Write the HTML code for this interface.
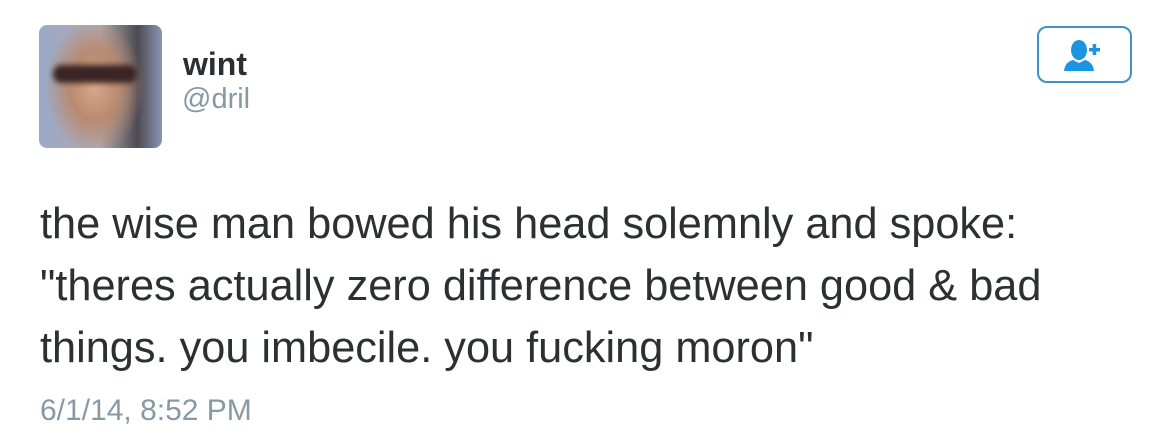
<!DOCTYPE html>
<html><head><meta charset="utf-8"><style>
html,body{margin:0;padding:0;background:#fff;width:1153px;height:440px;overflow:hidden;font-family:"Liberation Sans",sans-serif;}
.av{position:absolute;left:39px;top:25px;width:123px;height:123px;border-radius:8px;overflow:hidden;
background:radial-gradient(ellipse 40% 55% at 45% 50%,#d9a98a 0%,#b88a70 50%,rgba(150,130,120,0) 100%),linear-gradient(90deg,#9aa9c8 0%,#b0aab0 50%,#4d4a52 80%,#8a96b5 100%);}
.gl{position:absolute;left:14px;top:40px;width:84px;height:18px;background:#3a2424;border-radius:8px;filter:blur(3px);}
.name{position:absolute;left:183px;top:46px;font-size:32px;font-weight:bold;color:#292f33;}
.handle{position:absolute;left:182px;top:83px;font-size:29px;color:#8899a6;}
.btn{position:absolute;left:1037px;top:26px;width:95px;height:57px;border:2.5px solid #3b94c6;border-radius:10px;box-sizing:border-box;}
.body{position:absolute;left:40px;top:193px;font-size:43.3px;line-height:62px;color:#2b3033;white-space:nowrap;}
.date{position:absolute;left:40px;top:394px;font-size:30px;color:#8899a6;}
</style></head><body>
<div class="av"><div class="gl"></div></div>
<div class="name">wint</div>
<div class="handle">@dril</div>
<div class="btn"><svg width="95" height="57" style="position:absolute;left:-2.5px;top:-2.5px" viewBox="0 0 95 57">
<ellipse cx="42" cy="24" rx="8" ry="10" fill="#1b95e0"/>
<path d="M27 45 Q28 36 36 34 L42 37 L48 34 Q56 36 57 45 Z" fill="#1b95e0"/>
<rect x="52" y="22" width="11" height="3.5" fill="#1b95e0"/><rect x="55.7" y="18" width="3.5" height="11" fill="#1b95e0"/>
</svg></div>
<div class="body">the wise man bowed his head solemnly and spoke:<br>"theres actually zero difference between good &amp; bad<br>things. you imbecile. you fucking moron"</div>
<div class="date">6/1/14, 8:52 PM</div>
</body></html>
